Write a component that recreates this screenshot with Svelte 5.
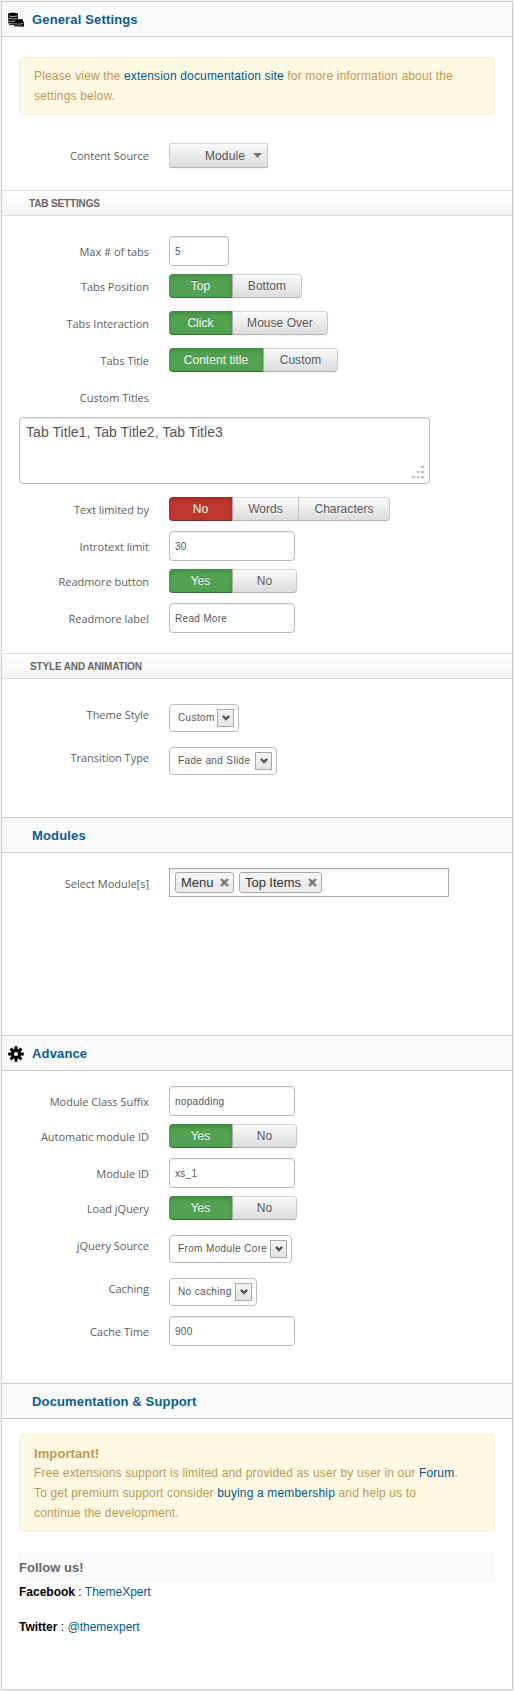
<script>
  const tabRows = [
    { type: 'input', label: 'Max # of tabs', value: '5', width: 60 },
    { type: 'group', label: 'Tabs Position', options: [['Top', 64], ['Bottom', 69]] },
    { type: 'group', label: 'Tabs Interaction', options: [['Click', 64], ['Mouse Over', 95]] },
    { type: 'group', label: 'Tabs Title', options: [['Content title', 95], ['Custom', 74]] },
    { type: 'area', label: 'Custom Titles', value: 'Tab Title1, Tab Title2, Tab Title3' },
    { type: 'group', label: 'Text limited by', danger: true, options: [['No', 64], ['Words', 66], ['Characters', 91]] },
    { type: 'input', label: 'Introtext limit', value: '30', width: 126 },
    { type: 'group', label: 'Readmore button', options: [['Yes', 64], ['No', 64]] },
    { type: 'input', label: 'Readmore label', value: 'Read More', width: 126 }
  ];
  const styleRows = [
    { type: 'select', label: 'Theme Style', value: 'Custom', width: 70 },
    { type: 'select', label: 'Transition Type', value: 'Fade and Slide', width: 108 }
  ];
  const advanceRows = [
    { type: 'input', label: 'Module Class Suffix', value: 'nopadding', width: 126 },
    { type: 'group', label: 'Automatic module ID', options: [['Yes', 64], ['No', 64]] },
    { type: 'input', label: 'Module ID', value: 'xs_1', width: 126 },
    { type: 'group', label: 'Load jQuery', options: [['Yes', 64], ['No', 64]] },
    { type: 'select', label: 'jQuery Source', value: 'From Module Core', width: 123 },
    { type: 'select', label: 'Caching', value: 'No caching', width: 88 },
    { type: 'input', label: 'Cache Time', value: '900', width: 126 }
  ];
  const chips = [['Menu', 59], ['Top Items', 83]];
</script>

{#snippet rows(list)}
  {#each list as row}
    <div class="row {row.type}">
      <div class="label">{row.label}</div>
      {#if row.type === 'input'}
        <div class="field" style="width:{row.width}px">{row.value}</div>
      {:else if row.type === 'group'}
        <div class="btns" class:danger={row.danger}>
          {#each row.options as [text, w], i}
            <div class="btn" class:on={i === 0} style="width:{w}px">{text}</div>
          {/each}
        </div>
      {:else if row.type === 'select'}
        <div class="pick" style="width:{row.width}px">
          <span>{row.value}</span>
          <i><svg width="8" height="6" viewBox="0 0 8 6"><path d="M0.9 0.9L4 4L7.1 0.9" fill="none" stroke="#555" stroke-width="2.3" /></svg></i>
        </div>
      {/if}
    </div>
    {#if row.type === 'area'}
      <div class="textarea">
        {row.value}
        <svg class="grip" width="12" height="12" fill="#bbb" shape-rendering="crispEdges">
          <path d="M9 0h3v2h-3zM5 5h2v2h-2zM9 5h3v2h-3zM0 10h3v2h-3zM5 10h2v2h-2zM9 10h3v2h-3z" />
        </svg>
      </div>
    {/if}
  {/each}
{/snippet}

<main>
  <h2>
    <svg class="icon" width="16" height="16" viewBox="0 0 16 16">
      <path d="M0 2.2C0 .3 10 .3 10 2.2V7.5L6.5 8.5V13C3 13.6 .5 12.8 .5 11.8Z" />
      <path d="M.8 3.9Q5 5.4 9.6 3.9M.8 6.4Q5 7.8 9 6.4M.8 8.9Q3.5 10 6.2 9.4M1 11.4Q3.5 12.2 6 11.8" fill="none" stroke="#fafafa" stroke-width=".7" />
      <path d="M6 10.5L8 7.5L14 7L16 10.5V14L14.6 15L6.4 14.6Z" />
      <path d="M6.6 11.7Q11 12.8 15.6 11.4M7 14Q10 14.8 14.5 14" fill="none" stroke="#fafafa" stroke-width=".6" />
    </svg>
    <span>General Settings</span>
  </h2>
  <section class="general">
    <div class="alert">
      <p>Please view the <a>extension documentation site</a> for more information about the</p>
      <p>settings below.</p>
    </div>
    <div class="row source">
      <div class="label">Content Source</div>
      <div class="drop"><span>Module</span><svg width="9" height="5"><path d="M0 0h9L4.5 5z" fill="#777" /></svg></div>
    </div>
  </section>

  <h3>TAB SETTINGS</h3>
  <section class="tabs">{@render rows(tabRows)}</section>

  <h3 class="s2">STYLE AND ANIMATION</h3>
  <section class="styles">{@render rows(styleRows)}</section>

  <h2 class="mid"><span>Modules</span></h2>
  <section class="modules">
    <div class="row mods">
      <div class="label">Select Module[s]</div>
      <div class="chosen">
        {#each chips as [name, w]}
          <div class="chip" style="width:{w}px">
            <span>{name}</span>
            <svg width="9" height="9" viewBox="0 0 9 9"><path d="M1 1L8 8M8 1L1 8" stroke="#777" stroke-width="2.4" /></svg>
          </div>
        {/each}
      </div>
    </div>
  </section>

  <h2 class="mid">
    <svg class="icon" width="16" height="16" viewBox="-8 -8 16 16">
      <g stroke="#000" stroke-width="3">
        <path d="M0-7.8V-3M0 7.8V3M-7.8 0H-3M7.8 0H3M-5.4-5.4L-2.5-2.5M5.4 5.4L2.5 2.5M-5.4 5.4L-2.5 2.5M5.4-5.4L2.5-2.5" />
        <circle r="3.6" fill="none" />
      </g>
    </svg>
    <span>Advance</span>
  </h2>
  <section class="advance">{@render rows(advanceRows)}</section>

  <h2 class="mid"><span>Documentation &amp; Support</span></h2>
  <section class="docs">
    <div class="alert">
      <h4>Important!</h4>
      <p>Free extensions support is limited and provided as user by user in our <a>Forum</a>.</p>
      <p>To get premium support consider <a>buying a membership</a> and help us to</p>
      <p>continue the development.</p>
    </div>
    <h5>Follow us!</h5>
    <div class="social"><b>Facebook</b> : <a>ThemeXpert</a></div>
    <div class="social"><b>Twitter</b> : <a>@themexpert</a></div>
  </section>
</main>

<style>
  :global(body) { margin: 0; background: #f4f4f4; }
  :global(#app) { display: flow-root; }
  * { box-sizing: border-box; }
  main {
    margin: 1px;
    height: 1689px;
    border: 1px solid #ccc;
    background: #fff;
    font: 12px/20px "Liberation Sans", Arial, sans-serif;
    color: #555;
  }
  p, h2, h3, h4, h5 { margin: 0; white-space: nowrap; }
  a { color: #025a8d; }
  h2 {
    display: grid;
    grid-template-columns: 30px 1fr;
    align-items: center;
    height: 35px;
    background: #fafafa;
    border-bottom: 1px solid #ccc;
    color: #0b5c93;
    font-size: 13px;
    line-height: 34px;
    letter-spacing: 0.15px;
  }
  h2 span { grid-column: 2; padding-top: 1px; line-height: 33px; }
  h2.mid { height: 36px; border-top: 1px solid #ccc; }
  .icon { grid-row: 1; margin-left: 6px; margin-top: 1px; }
  h3 {
    height: 26px;
    padding-left: 27px;
    border: solid #ddd;
    border-width: 1px 0;
    background: linear-gradient(#fff, #f4f4f4);
    color: #666;
    font-size: 10px;
    line-height: 25px;
    letter-spacing: -0.15px;
  }
  h3.s2 { padding-left: 28px; }
  section { padding: 0 17px; }
  .general { height: 153px; padding-top: 20px; }
  .tabs { height: 437px; padding-top: 20px; }
  .styles { height: 138px; padding-top: 20px; }
  .modules { height: 182px; padding-top: 15px; }
  .advance { height: 312px; padding-top: 15px; }
  .docs { padding-top: 15px; }
  .alert {
    padding: 8px 14px;
    border: 1px solid #fbeed5;
    border-radius: 4px;
    background: #fcf8e3;
    color: #c09853;
    letter-spacing: 0.16px;
  }
  .alert h4 { height: 19px; font-size: 13px; line-height: 20px; letter-spacing: 0.1px; }
  .docs .alert { padding: 9px 14px; height: 98px; }

  .row { display: grid; grid-template-columns: 130px 1fr; column-gap: 20px; align-items: start; }
  .label {
    text-align: right;
    font: 11px/18px "Open Sans", "Noto Sans", sans-serif;
    letter-spacing: -0.02px;
    color: #5c5c5c;
    white-space: nowrap;
  }
  .row.input { padding-bottom: 5px; }
  .row.input .label { margin-top: 7px; }
  .row.group { padding: 3px 0 10px; }
  .row.group .label { margin-top: 4px; }
  .row.select { padding: 5px 0 10px; }
  .row.select .label { margin-top: 2px; }
  .row.area { height: 35px; padding-top: 7px; }
  .row.source { margin-top: 28px; }
  .row.source .label { margin-top: 4px; }
  .row.mods .label { margin-top: 7px; }

  .field {
    height: 30px;
    padding-left: 5px;
    border: 1px solid #bbb;
    border-radius: 4px;
    box-shadow: inset 0 1px 1px rgba(0, 0, 0, 0.075);
    font-size: 10px;
    line-height: 29px;
    letter-spacing: 0.3px;
  }
  .btns { display: flex; height: 24px; }
  .btn {
    height: 24px;
    border: 1px solid;
    border-color: #d4d4d4 #c8c8c8 #b3b3b3 #ccc;
    border-left-width: 0;
    background: linear-gradient(#fafafa, #dcdcdc);
    box-shadow: inset 0 1px 0 rgba(255, 255, 255, 0.2), 0 1px 2px rgba(0, 0, 0, 0.05);
    text-align: center;
    line-height: 22px;
    color: #555;
    letter-spacing: 0.04px;
    text-shadow: 0 1px 1px rgba(255, 255, 255, 0.75);
    white-space: nowrap;
  }
  .btn:first-child { border-radius: 4px 0 0 4px; }
  .btn:last-child { border-radius: 0 4px 4px 0; }
  .btn.on {
    background: #51a351;
    border-color: #428a42 #3f883f #387038 #428a42;
    border-right-color: #a5b5a5;
    box-shadow: inset 0 2px 4px rgba(0, 0, 0, 0.15);
    color: #fff;
    text-shadow: 0 -1px 0 rgba(0, 0, 0, 0.25);
  }
  .danger .btn.on { background: #bd362f; border-color: #9c2c27 #c0a5a3 #8a2621 #9c2c27; }
  .textarea {
    position: relative;
    width: 411px;
    height: 67px;
    margin-bottom: 10px;
    padding: 4px 6px;
    border: 1px solid #bbb;
    border-radius: 4px;
    box-shadow: inset 0 1px 1px rgba(0, 0, 0, 0.075);
    font-size: 14px;
    letter-spacing: 0.06px;
  }
  .grip { position: absolute; right: 5px; bottom: 5px; }
  .pick {
    display: flex;
    justify-content: space-between;
    align-items: center;
    height: 28px;
    padding: 0 4px 0 8px;
    border: 1px solid #bbb;
    border-radius: 4px;
    font-size: 10px;
    letter-spacing: 0.37px;
    white-space: nowrap;
  }
  .pick i {
    display: grid;
    place-items: center;
    width: 17px;
    height: 18px;
    border: 1px solid #a8a8a8;
    background: linear-gradient(#f4f4f4, #e4e4e4);
  }
  .drop {
    display: flex;
    align-items: center;
    gap: 8px;
    width: 99px;
    height: 25px;
    padding-left: 35px;
    border: 1px solid;
    border-color: #d4d4d4 #c8c8c8 #b3b3b3;
    border-radius: 2px;
    background: linear-gradient(#fafafa, #dcdcdc);
    box-shadow: 0 1px 2px rgba(0, 0, 0, 0.05);
    letter-spacing: 0.1px;
  }
  .chosen {
    display: flex;
    gap: 5px;
    width: 280px;
    height: 29px;
    padding: 3px 5px;
    border: 1px solid #aaa;
    background: linear-gradient(#eee 0, #fff 4px);
  }
  .chip {
    display: flex;
    justify-content: space-between;
    align-items: center;
    height: 21px;
    padding: 0 4px 0 5px;
    border: 1px solid #aaa;
    border-radius: 3px;
    background: linear-gradient(#f4f4f4 20%, #f0f0f0 50%, #e8e8e8 52%, #eee);
    color: #333;
    font-size: 13px;
    letter-spacing: -0.05px;
    white-space: nowrap;
  }
  h5 {
    height: 30px;
    margin: 20px 0 0;
    background: #fafafa;
    color: #666;
    font-size: 13px;
    line-height: 31px;
    letter-spacing: 0.03px;
  }
  .social { height: 20px; margin-bottom: 15px; line-height: 20px; color: #000; }
</style>
